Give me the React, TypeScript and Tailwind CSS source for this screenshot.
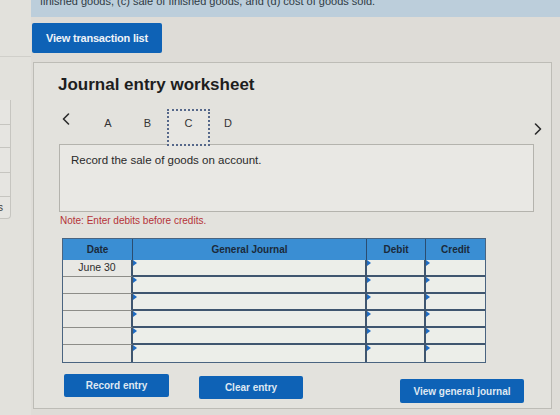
import React from "react";

const rows = ["June 30", "", "", "", "", ""];

function Marker() {
  return (
    <span className="absolute left-0 top-0 w-0 h-0 border-l-[4px] border-l-[#1e6bc2] border-y-[3px] border-y-transparent" />
  );
}

function Chevron({ dir }: { dir: "left" | "right" }) {
  return (
    <svg width="8" height="12" viewBox="0 0 8 12" fill="none">
      <path
        d={dir === "left" ? "M6.5 1 L1.5 6 L6.5 11" : "M1.5 1 L6.5 6 L1.5 11"}
        stroke="#2b2b2b"
        strokeWidth="1.6"
        strokeLinecap="round"
        strokeLinejoin="round"
      />
    </svg>
  );
}

function JournalTable() {
  return (
    <div className="w-[424px] border border-[#4a6480] ml-[4px]">
      <div className="grid grid-cols-[70px_234px_59px_59px] bg-[#3a8ed3] text-[10px] font-bold text-[#1b2a3a]">
        <div className="h-[21px] flex items-center justify-center border-r border-[#2b4d70]">Date</div>
        <div className="h-[21px] flex items-center justify-center border-r border-[#2b4d70]">General Journal</div>
        <div className="h-[21px] flex items-center justify-center border-r border-[#2b4d70]">Debit</div>
        <div className="h-[21px] flex items-center justify-center">Credit</div>
      </div>
      {rows.map((date, i) => {
        const last = i === rows.length - 1;
        return (
          <div key={i} className="grid grid-cols-[70px_234px_59px_59px]">
            <div
              className={`h-[17px] flex items-center justify-center text-[10.5px] text-[#2d2d2d] bg-[#e8e8e4] border-r-2 border-[#3f566f] ${
                last ? "" : "border-b border-b-[#8d8d88]"
              }`}
            >
              {date}
            </div>
            <div className={`relative h-[17px] bg-[#eceee9] border-r-2 border-[#3f566f] ${last ? "" : "border-b-2"}`}>
              <Marker />
            </div>
            <div className={`relative h-[17px] bg-[#eceee9] border-r-2 border-[#3f566f] ${last ? "" : "border-b-2"}`}>
              <Marker />
            </div>
            <div className={`relative h-[17px] bg-[#eceee9] border-[#3f566f] ${last ? "" : "border-b-2"}`}>
              <Marker />
            </div>
          </div>
        );
      })}
    </div>
  );
}

export default function App() {
  return (
    <div className="w-[560px] h-[415px] overflow-hidden bg-[#dedcd7] flex font-['Liberation_Sans',Arial,sans-serif]">
      {/* left rail with the edge of the side list */}
      <div className="w-[31px] shrink-0 flex flex-col bg-[#e2e1dc]">
        <div className="h-[57px] border-b border-[#d0cfca]" />
        <div className="mt-[43px] w-[11px] rounded-br-[4px] border-r border-b border-[#c6c5c0] bg-[#e6e5e1] flex flex-col">
          <div className="h-[25px] border-b border-[#c6c5c0]" />
          <div className="h-[23px] border-b border-[#c6c5c0]" />
          <div className="h-[25px] border-b border-[#c6c5c0]" />
          <div className="h-[24px] border-b border-[#c6c5c0]" />
          <div className="h-[21px] flex items-center">
            <span className="-ml-[2px] text-[10px] leading-none text-[#3a3a3a]">s</span>
          </div>
        </div>
      </div>

      <div className="flex-1 flex flex-col">
        {/* instructions strip */}
        <div className="h-[17px] bg-[#bccedb] overflow-hidden pl-[9px]">
          <p className="-mt-[5px] text-[11px] leading-[13px] text-[#2e3a44] whitespace-nowrap">
            finished goods, (c) sale of finished goods, and (d) cost of goods sold.
          </p>
        </div>

        <button className="mt-[6px] ml-[1px] h-[30px] w-[130px] rounded-[2px] bg-[#0e62b6] text-[11px] font-bold tracking-[-0.2px] text-[#eef3f8]">
          View transaction list
        </button>

        {/* worksheet panel */}
        <div className="mt-[9px] ml-[2px] mr-[8px] h-[347px] border border-[#bdbcb6] bg-[#e3e2dd] pl-[24px] pt-[12px] flex flex-col">
          <h2 className="text-[17px] leading-[20px] font-bold text-[#1e1e1e]">Journal entry worksheet</h2>

          <div className="relative z-10 mt-[14px] h-[37px] flex items-start text-[11px] leading-[13px] text-[#333]">
            <div className="w-[30px] pt-[4px] pl-[4px]">
              <Chevron dir="left" />
            </div>
            <div className="w-[40px] pt-[8px] text-center">A</div>
            <div className="w-[39px] pt-[8px] text-center">B</div>
            <div className="w-[43px] h-[37px] pt-[6px] text-center border-2 border-dotted border-[#56688a] bg-[#e7e6e2]">
              C
            </div>
            <div className="w-[36px] pt-[8px] text-center">D</div>
            <div className="flex-1" />
            <div className="mt-[14px] mr-[9px]">
              <Chevron dir="right" />
            </div>
          </div>

          <div className="-mt-[2px] ml-[1px] mr-[17px] h-[68px] border border-[#b4b3ad] bg-[#e9e8e4] pl-[11px] pt-[8px] text-[11.5px] leading-[14px] text-[#2a2a2a]">
            Record the sale of goods on account.
          </div>

          <p className="mt-[3px] ml-[2px] text-[10px] leading-[12px] text-[#b53238]">Note: Enter debits before credits.</p>

          <div className="mt-[11px]">
            <JournalTable />
          </div>

          <div className="mt-[11px] flex items-start text-[10px] font-bold text-[#dfe8f2]">
            <button className="ml-[6px] w-[105px] h-[23px] rounded-[2px] bg-[#0e62b6]">Record entry</button>
            <button className="ml-[30px] mt-[2px] w-[104px] h-[23px] rounded-[2px] bg-[#0e62b6]">Clear entry</button>
            <button className="ml-[97px] mt-[5px] w-[124px] h-[24px] rounded-[2px] bg-[#0e62b6]">View general journal</button>
          </div>
        </div>
      </div>
    </div>
  );
}
